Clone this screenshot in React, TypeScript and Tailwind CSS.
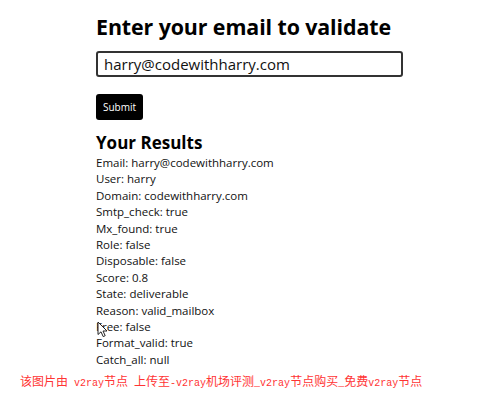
const results: [string, string][] = [
  ["Email", "harry@codewithharry.com"],
  ["User", "harry"],
  ["Domain", "codewithharry.com"],
  ["Smtp_check", "true"],
  ["Mx_found", "true"],
  ["Role", "false"],
  ["Disposable", "false"],
  ["Score", "0.8"],
  ["State", "deliverable"],
  ["Reason", "valid_mailbox"],
  ["Free", "false"],
  ["Format_valid", "true"],
  ["Catch_all", "null"],
];

const watermark: [string, boolean][] = [
  ["该图片由", true],
  [" v2ray", false],
  ["节点", true],
  [" ", false],
  ["上传至", true],
  ["-v2ray", false],
  ["机场评测", true],
  ["_v2ray", false],
  ["节点购买", true],
  ["_", false],
  ["免费", true],
  ["v2ray", false],
  ["节点", true],
];

const Cursor = () => (
  <svg
    width="12"
    height="17"
    viewBox="0 0 12 17"
    className="pointer-events-none absolute left-[1px] top-[2px]"
  >
    <path
      d="M1 1 L1 13.5 L4 10.8 L6.2 15.6 L8.2 14.7 L6 10 L10 10 Z"
      fill="#fff"
      stroke="#222"
      strokeWidth="1"
      strokeLinejoin="round"
    />
  </svg>
);

export default function App() {
  return (
    <div
      className="relative h-[406px] w-[477px] overflow-hidden bg-white text-black"
      style={{ fontFamily: '"Open Sans", Inter, sans-serif' }}
    >
      <div className="ml-24 w-[307px] pt-[12px]">
        <h1 className="text-[21.4px] font-bold leading-[30px] tracking-[-0.1px]">
          Enter your email to validate
        </h1>
        <input
          type="text"
          readOnly
          value="harry@codewithharry.com"
          className="mt-[9px] block h-[26px] w-[307px] rounded-[3px] border-2 border-[#333] px-[6px] text-[15px] text-[#111] outline-none"
        />
        <button className="mt-[17px] flex h-[26px] w-[47px] items-center justify-center rounded-[3px] bg-black text-[10px] font-medium text-white">
          Submit
        </button>
        <h2 className="mt-[11px] text-[17px] font-bold leading-[24px]">
          Your Results
        </h2>
        <div className="text-[11.5px] leading-[16.4px] text-[#111]">
          {results.map(([k, v]) => (
            <div key={k} className="relative">
              {k}: {v}
              {k === "Free" && <Cursor />}
            </div>
          ))}
        </div>
      </div>
      <div className="ml-[20px] mt-[4px] flex items-baseline whitespace-pre text-[#ff3434]">
        {watermark.map(([t, cjk], i) => (
          <span
            key={i}
            className={cjk ? "text-[12px]" : "text-[10px]"}
            style={{
              fontFamily: cjk
                ? '"Noto Sans CJK SC", sans-serif'
                : '"Liberation Mono", monospace',
            }}
          >
            {t}
          </span>
        ))}
      </div>
    </div>
  );
}
